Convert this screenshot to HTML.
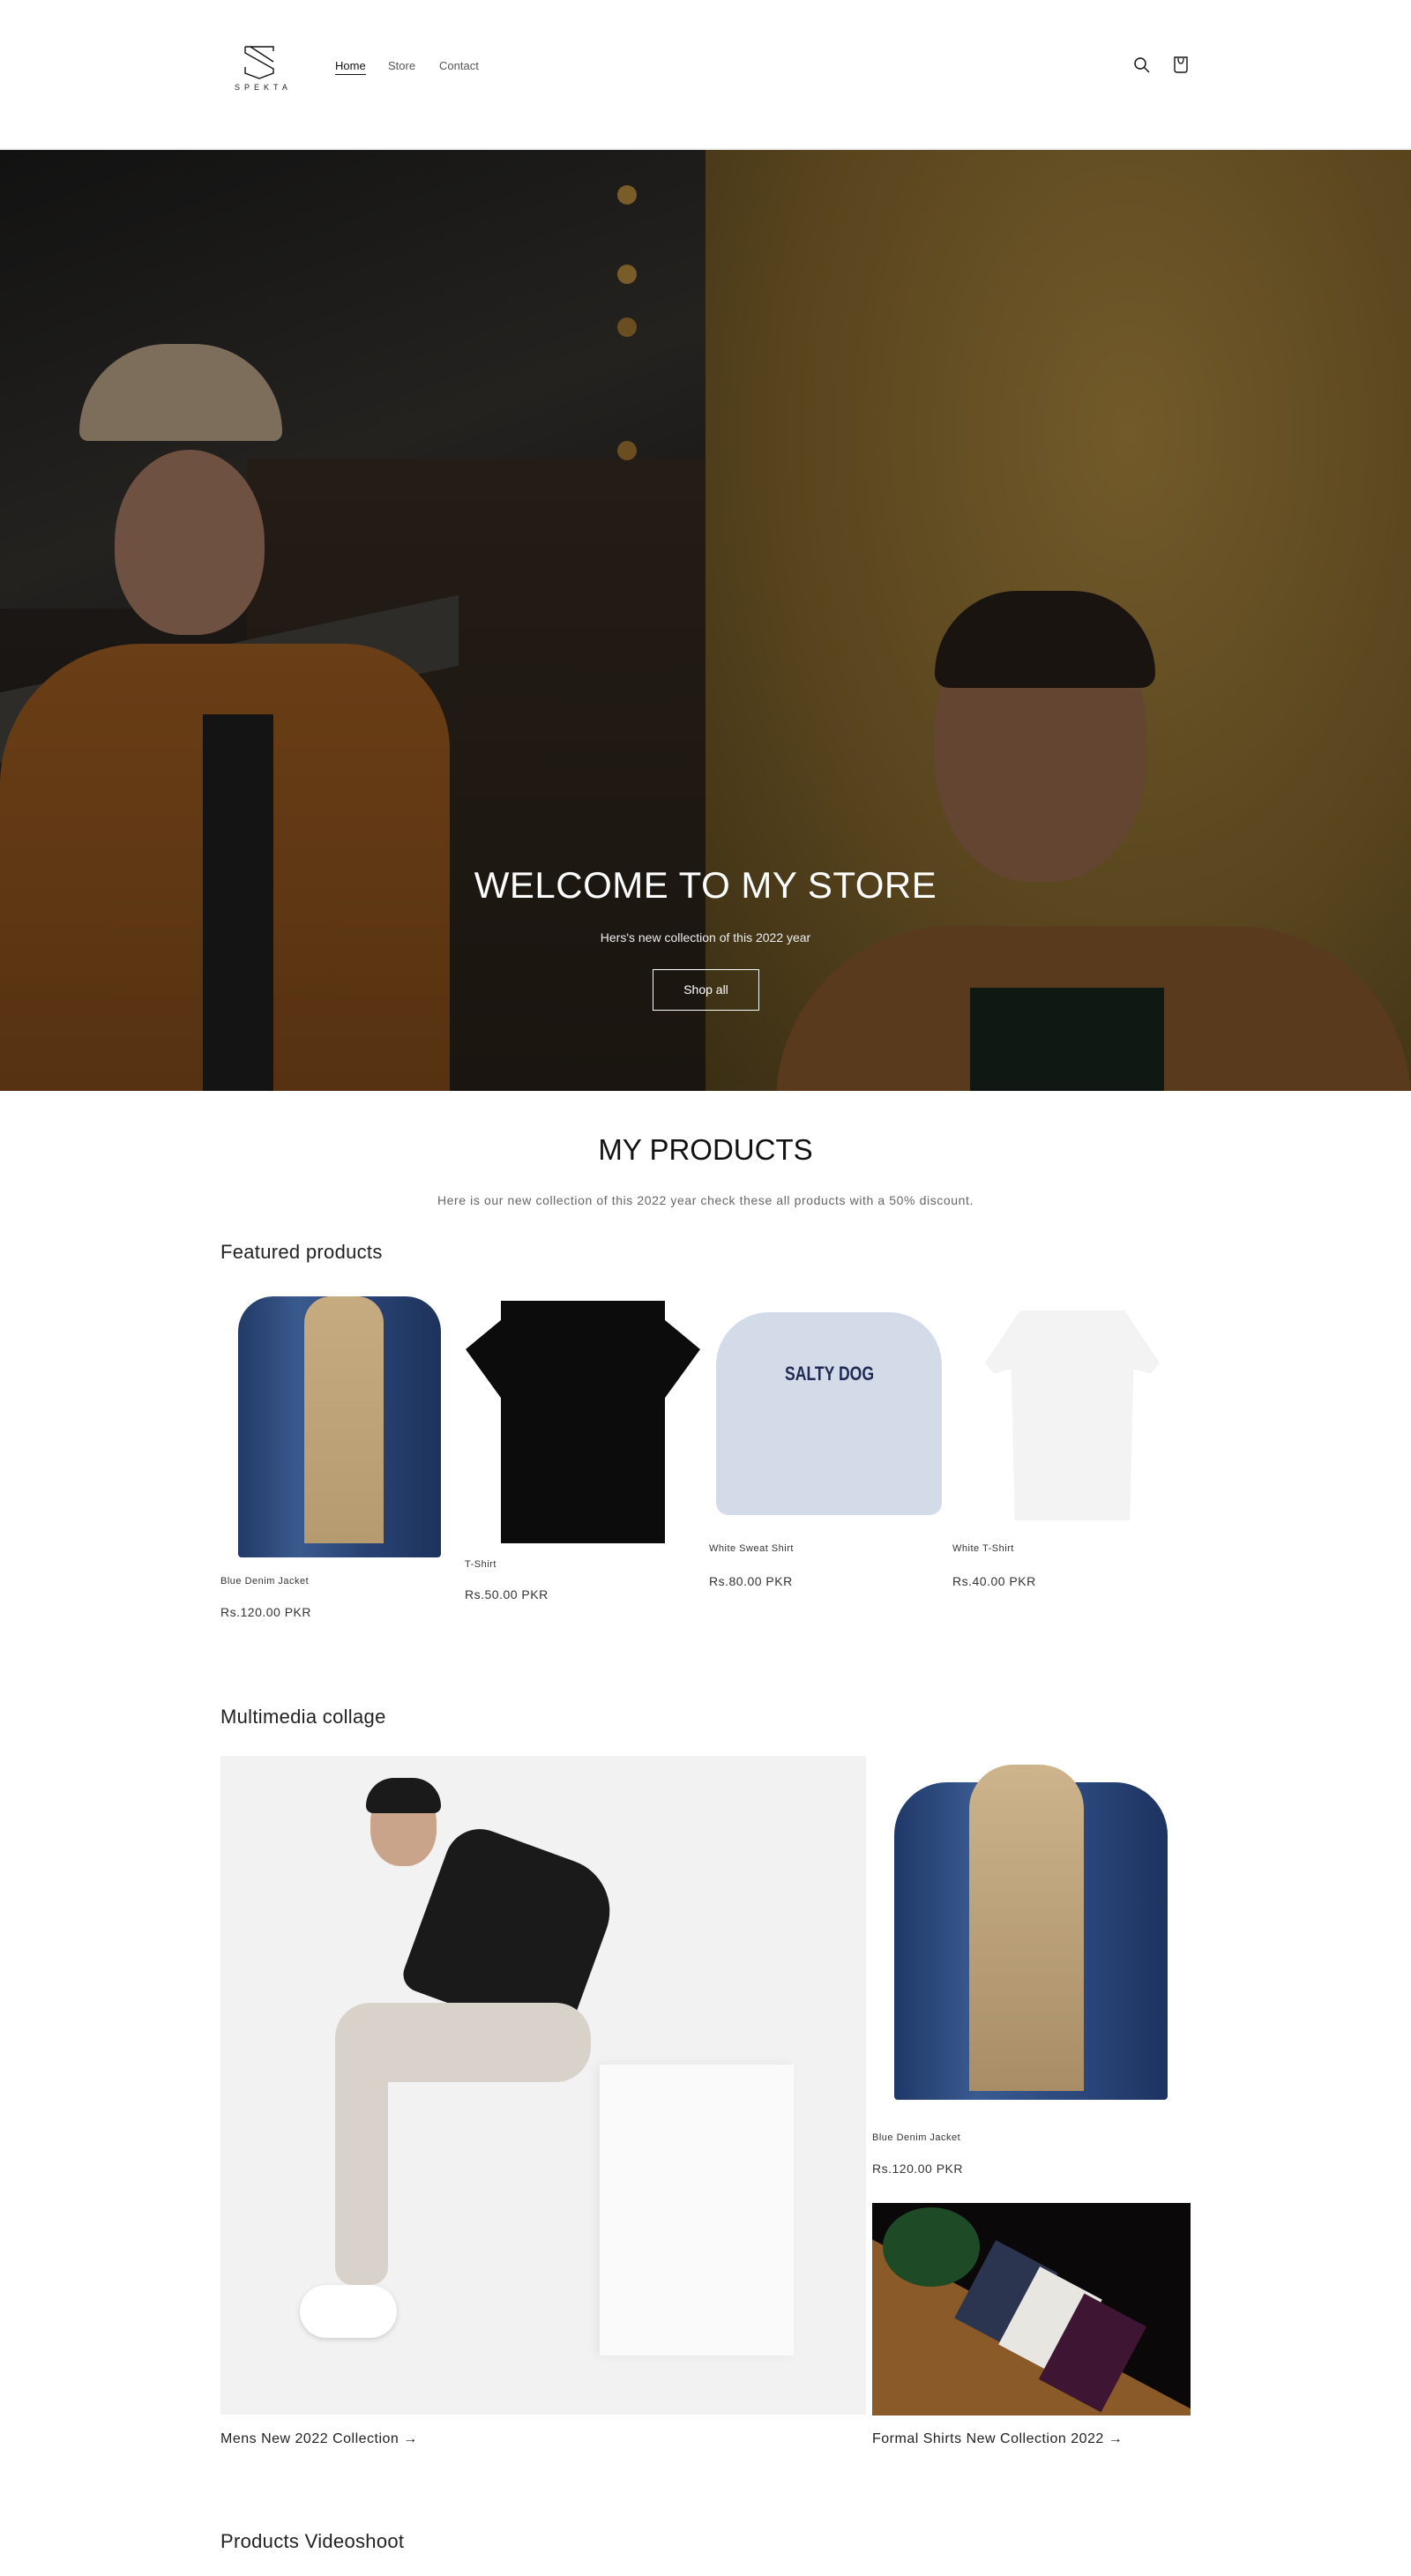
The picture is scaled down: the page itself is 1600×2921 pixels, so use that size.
<!DOCTYPE html>
<html><head><meta charset="utf-8"><style>
*{margin:0;padding:0;box-sizing:border-box}
body{width:1600px;height:2921px;background:#fff;font-family:"Liberation Sans",sans-serif;color:#121212;position:relative;overflow:hidden}
.a{position:absolute}
.t{position:absolute;white-space:nowrap}
.nav{font-size:13px;color:#555;top:67px}
.name{font-size:11px;color:#333;letter-spacing:.5px}
.price{font-size:14px;color:#333;letter-spacing:.5px}
</style></head><body>
<!-- header -->
<svg class="a" style="left:276px;top:52px" width="36" height="38" viewBox="0 0 36 38"><path d="M2 1H34V6M2 1V8L34 26V31L18 37L2 31V24M8 1L34 18" fill="none" stroke="#111" stroke-width="1.4"/></svg>
<div class="t" style="left:266px;top:94px;font-size:9px;letter-spacing:5px;color:#222">SPEKTA</div>
<div class="t nav" style="left:380px;color:#121212;border-bottom:1px solid #121212;padding-bottom:2px">Home</div>
<div class="t nav" style="left:440px">Store</div>
<div class="t nav" style="left:498px">Contact</div>
<svg class="a" style="left:1285px;top:64px" width="20" height="20" viewBox="0 0 20 20"><circle cx="8" cy="8" r="6" fill="none" stroke="#121212" stroke-width="1.5"/><path d="M12.5 12.5L18 18" stroke="#121212" stroke-width="1.5"/></svg>
<svg class="a" style="left:1330px;top:63px" width="18" height="20" viewBox="0 0 18 20"><path d="M2 2H16V16Q16 19 13 19H5Q2 19 2 16Z" fill="none" stroke="#121212" stroke-width="1.4"/><path d="M6 3Q6 9 9 9Q12 9 12 3" fill="none" stroke="#121212" stroke-width="1.3"/></svg>
<div class="a" style="left:0;top:168px;width:1600px;height:2px;background:#eee"></div>
<!-- hero -->
<div class="a" style="left:0;top:170px;width:800px;height:1067px;background:linear-gradient(180deg,#101010 0%,#1a1816 40%,#17120d 100%);overflow:hidden">
 <div class="a" style="left:0;top:0;width:800px;height:520px;background:linear-gradient(160deg,#121212,#24221f 60%,#151515)"></div>
 <div class="a" style="left:280px;top:350px;width:520px;height:720px;background:linear-gradient(180deg,#241c16,#1a1510)"></div>
 <div class="a" style="left:0;top:560px;width:520px;height:80px;background:#2e2c29;transform:skewY(-12deg)"></div>
 <div class="a" style="left:0;top:560px;width:510px;height:510px;background:linear-gradient(180deg,#6a3e16,#563211);border-radius:160px 120px 0 0"></div>
 <div class="a" style="left:230px;top:640px;width:80px;height:430px;background:#141414"></div>
 <div class="a" style="left:130px;top:340px;width:170px;height:210px;background:#6e5140;border-radius:50% 50% 45% 45%"></div>
 <div class="a" style="left:90px;top:220px;width:230px;height:110px;background:#7d6e5c;border-radius:100px 100px 10px 10px"></div>
 <div class="a" style="left:700px;top:40px;width:22px;height:22px;border-radius:50%;background:#7a5c28;box-shadow:0 90px 0 #7a5c28,0 150px 0 #6a4e22,0 290px 0 #6a4e22"></div>
</div>
<div class="a" style="left:800px;top:170px;width:800px;height:1067px;background:radial-gradient(ellipse at 60% 30%,#725a2a,#56431d 60%,#3a2e14);overflow:hidden">
 <div class="a" style="left:80px;top:880px;width:720px;height:300px;background:#593a1c;border-radius:200px 200px 0 0"></div>
 <div class="a" style="left:300px;top:950px;width:220px;height:200px;background:#101813"></div>
 <div class="a" style="left:260px;top:520px;width:240px;height:310px;background:#634532;border-radius:45%"></div>
 <div class="a" style="left:260px;top:500px;width:250px;height:110px;background:#1a1410;border-radius:120px 120px 20px 20px"></div>
</div>
<div class="t" style="left:0;width:1600px;text-align:center;top:980px;font-size:42px;color:#fff;letter-spacing:.5px">WELCOME TO MY STORE</div>
<div class="t" style="left:0;width:1600px;text-align:center;top:1055px;font-size:14px;color:#eee">Hers's new collection of this 2022 year</div>
<div class="a" style="left:740px;top:1099px;width:121px;height:47px;border:1px solid #fff;color:#fff;font-size:14px;text-align:center;line-height:45px">Shop all</div>
<!-- products -->
<div class="t" style="left:0;width:1600px;text-align:center;top:1285px;font-size:33px;color:#121212">MY PRODUCTS</div>
<div class="t" style="left:0;width:1600px;text-align:center;top:1353px;font-size:14px;color:#666;letter-spacing:.6px">Here is our new collection of this 2022 year check these all products with a 50% discount.</div>
<div class="t" style="left:250px;top:1407px;font-size:22px;color:#222;letter-spacing:.3px">Featured products</div>
<!-- jacket -->
<div class="a" style="left:270px;top:1470px;width:230px;height:296px;background:linear-gradient(90deg,#223a66,#3a5a8e 30%,#2a4476 60%,#1e335c);border-radius:40px 40px 4px 4px"></div>
<div class="a" style="left:345px;top:1470px;width:90px;height:280px;background:linear-gradient(180deg,#c7ab80,#b69a70);border-radius:30px 30px 0 0"></div>
<div class="t name" style="left:250px;top:1787px">Blue Denim Jacket</div>
<div class="t price" style="left:250px;top:1820px">Rs.120.00 PKR</div>
<!-- tshirt -->
<div class="a" style="left:528px;top:1475px;width:266px;height:110px;background:#0c0c0c;clip-path:polygon(25% 0,75% 0,100% 50%,85% 100%,15% 100%,0 50%)"></div>
<div class="a" style="left:568px;top:1475px;width:186px;height:275px;background:#0c0c0c"></div>
<div class="t name" style="left:527px;top:1768px">T-Shirt</div>
<div class="t price" style="left:527px;top:1800px">Rs.50.00 PKR</div>
<!-- sweat -->
<div class="a" style="left:812px;top:1488px;width:256px;height:230px;background:#d4dbe8;border-radius:60px 60px 14px 14px"></div>
<div class="t" style="left:890px;top:1545px;font-size:22px;font-weight:bold;color:#1f2a55;transform:scaleX(.8);transform-origin:left">SALTY DOG</div>
<div class="t name" style="left:804px;top:1750px">White Sweat Shirt</div>
<div class="t price" style="left:804px;top:1785px">Rs.80.00 PKR</div>
<!-- white tee -->
<div class="a" style="left:1117px;top:1486px;width:198px;height:238px;background:#f3f3f3;clip-path:polygon(20% 0,80% 0,100% 25%,95% 30%,85% 28%,83% 100%,17% 100%,15% 28%,5% 30%,0 25%)"></div>
<div class="t name" style="left:1080px;top:1750px">White T-Shirt</div>
<div class="t price" style="left:1080px;top:1785px">Rs.40.00 PKR</div>
<!-- collage -->
<div class="t" style="left:250px;top:1934px;font-size:22px;color:#222;letter-spacing:.3px">Multimedia collage</div>
<div class="a" style="left:250px;top:1991px;width:732px;height:747px;background:#f2f2f2;overflow:hidden">
 <div class="a" style="left:430px;top:350px;width:220px;height:330px;background:#fafafa;box-shadow:-4px 0 10px #e4e4e4"></div>
 <div class="a" style="left:230px;top:100px;width:200px;height:200px;background:#1a1a1a;border-radius:40px 60px 20px 20px;transform:rotate(20deg)"></div>
 <div class="a" style="left:130px;top:280px;width:290px;height:90px;background:#d8d2ca;border-radius:40px"></div>
 <div class="a" style="left:130px;top:300px;width:60px;height:300px;background:#d8d2ca;border-radius:20px"></div>
 <div class="a" style="left:170px;top:35px;width:75px;height:90px;background:#c9a48a;border-radius:45%"></div>
 <div class="a" style="left:165px;top:25px;width:85px;height:40px;background:#1a1a1a;border-radius:40px 40px 10px 10px"></div>
 <div class="a" style="left:90px;top:600px;width:110px;height:60px;background:#fff;border-radius:30px;box-shadow:0 2px 6px #ccc"></div>
</div>
<div class="a" style="left:989px;top:1991px;width:361px;height:412px;background:#fff">
 <div class="a" style="left:25px;top:30px;width:310px;height:360px;background:linear-gradient(90deg,#1f3868,#3a5a90 30%,#2a467a 70%,#1d3360);border-radius:60px 60px 4px 4px"></div>
 <div class="a" style="left:110px;top:10px;width:130px;height:370px;background:linear-gradient(180deg,#cdb48c,#a88d66);border-radius:50px 50px 0 0"></div>
</div>
<div class="t name" style="left:989px;top:2418px">Blue Denim Jacket</div>
<div class="t price" style="left:989px;top:2451px">Rs.120.00 PKR</div>
<div class="a" style="left:989px;top:2498px;width:361px;height:241px;background:#0a0808;overflow:hidden">
 <div class="a" style="left:-40px;top:20px;width:460px;height:180px;background:#8a5a28;transform:rotate(28deg);transform-origin:0 0"></div>
 <div class="a" style="left:12px;top:5px;width:110px;height:90px;background:#1e4a26;border-radius:50%"></div>
 <div class="a" style="left:112px;top:55px;width:80px;height:100px;background:#2c3550;transform:rotate(28deg)"></div>
 <div class="a" style="left:162px;top:85px;width:80px;height:100px;background:#e8e6e0;transform:rotate(28deg)"></div>
 <div class="a" style="left:210px;top:115px;width:80px;height:110px;background:#3e1532;transform:rotate(28deg)"></div>
</div>
<div class="t" style="left:250px;top:2757px;font-size:16px;color:#222;letter-spacing:.5px">Mens New 2022 Collection →</div>
<div class="t" style="left:989px;top:2757px;font-size:16px;color:#222;letter-spacing:.5px">Formal Shirts New Collection 2022 →</div>
<div class="t" style="left:250px;top:2869px;font-size:22px;color:#222;letter-spacing:.3px">Products Videoshoot</div>
</body></html>
